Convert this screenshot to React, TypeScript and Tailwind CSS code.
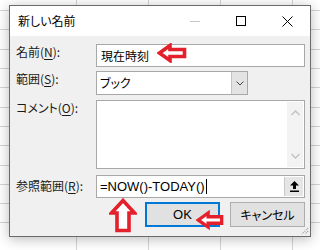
import React from "react";

const jp = "font-['Segoe_UI','Noto_Sans_CJK_JP',sans-serif] [font-feature-settings:'palt']";

function SheetGrid() {
  const cols = [76.5, 148.5, 220.5, 292.5];
  const rows = [10.5, 29.5, 49.5, 68.5, 87.5, 107.5, 126.5, 145.5, 165.5, 184.5, 203.5, 222.5];
  return (
    <svg className="absolute inset-0" width="320" height="250">
      {cols.map((x) => (
        <line key={"c" + x} x1={x} y1={0} x2={x} y2={250} stroke="#d4d4d4" strokeWidth={1} />
      ))}
      {rows.map((y) => (
        <line key={"r" + y} x1={0} y1={y} x2={320} y2={y} stroke="#d4d4d4" strokeWidth={1} />
      ))}
    </svg>
  );
}

function Label({ text, k, rest, className = "" }: { text: string; k: string; rest: string; className?: string }) {
  return (
    <div className={`w-[80px] shrink-0 text-[12px] leading-[16px] text-[#1a1a1a] ${className}`}>
      {text}(<span className="underline underline-offset-[2px]">{k}</span>){rest}
    </div>
  );
}

function RedArrow({ dir, className }: { dir: "left" | "up"; className: string }) {
  if (dir === "left") {
    return (
      <svg className={className} viewBox="0 0 30 20" width="30" height="20">
        <polygon
          points="2.5,10 13,2.5 13,6.5 27.5,6.5 27.5,13.5 13,13.5 13,17.5"
          fill="#fff"
          stroke="#e3202b"
          strokeWidth={3.6}
          strokeLinejoin="miter"
        />
      </svg>
    );
  }
  return (
    <svg className={className} viewBox="0 0 28 35" width="28" height="35">
      <polygon
        points="14,2.5 25.5,15 20,15 20,32.5 8,32.5 8,15 2.5,15"
        fill="#fff"
        stroke="#e3202b"
        strokeWidth={3.6}
        strokeLinejoin="miter"
      />
    </svg>
  );
}

export default function App() {
  return (
    <div className={`relative w-[320px] h-[250px] overflow-hidden bg-white ${jp}`}>
      <SheetGrid />

      <div className="absolute left-[9px] top-[5px] w-[302px] h-[232px] border border-[#6b6b6b] bg-[#f0f0f0] shadow-[0_2px_12px_rgba(0,0,0,0.28)] flex flex-col">
        {/* title bar */}
        <div className="h-[30px] bg-white flex items-center shrink-0">
          <div className="pl-[8px] flex-1 text-[12px] text-black">新しい名前</div>
          <div className="w-[46px] h-full flex items-center justify-center">
            <div className="w-[10px] h-px bg-[#c8c8c8]" />
          </div>
          <div className="w-[46px] h-full flex items-center justify-center">
            <div className="w-[10px] h-[10px] border border-black" />
          </div>
          <div className="w-[46px] h-full flex items-center justify-center">
            <svg width="11" height="11" viewBox="0 0 11 11">
              <path d="M0.5 0.5 L10.5 10.5 M10.5 0.5 L0.5 10.5" stroke="#000" strokeWidth={1} />
            </svg>
          </div>
        </div>

        {/* body */}
        <div className="relative flex-1 flex flex-col pl-[6px] pr-[5px] pt-[8px]">
          <div className="flex items-start">
            <Label text="名前" k="N" rest=":" />
            <div className="flex-1 h-[23px] border border-[#a8a8a8] bg-white flex items-center pl-[4px] text-[12px] text-black">
              現在時刻
            </div>
          </div>

          <div className="flex items-start mt-[4px]">
            <Label text="範囲" k="S" rest=":" />
            <div className="w-[152px] h-[24px] border border-[#a8a8a8] bg-white flex">
              <div className="flex-1 flex items-center pl-[3px] text-[12px] text-black">ブック</div>
              <div className="w-[16px] bg-[#e3e3e3] border-l border-[#c4c4c4] flex items-center justify-center">
                <svg width="8" height="5" viewBox="0 0 8 5">
                  <path d="M0.5 0.5 L4 4 L7.5 0.5" fill="none" stroke="#444" strokeWidth={1} />
                </svg>
              </div>
            </div>
          </div>

          <div className="flex items-start mt-[5px]">
            <Label text="コメント" k="O" rest=":" />
            <div className="flex-1 h-[69px] border border-[#a8a8a8] bg-white flex justify-end">
              <div className="w-[16px] mr-px my-px bg-[#f3f3f3] flex flex-col justify-between items-center py-[8px]">
                <svg width="9" height="6" viewBox="0 0 9 6">
                  <path d="M0.5 5 L4.5 1 L8.5 5" fill="none" stroke="#c2c2c2" strokeWidth={1.4} />
                </svg>
                <svg width="9" height="6" viewBox="0 0 9 6">
                  <path d="M0.5 1 L4.5 5 L8.5 1" fill="none" stroke="#c2c2c2" strokeWidth={1.4} />
                </svg>
              </div>
            </div>
          </div>

          <div className="flex items-start mt-[6px]">
            <Label text="参照範囲" k="R" rest=":" className="pt-[3px]" />
            <div className="flex-1 h-[23px] border border-[#a8a8a8] bg-white flex">
              <div className="flex-1 flex items-center pl-[3px] font-['Liberation_Sans',sans-serif] text-[13px] text-black">
                =NOW()-TODAY()
                <span className="ml-px w-px h-[15px] bg-black" />
              </div>
              <div className="w-[19px] my-px mr-px bg-[#e5e5e5] border-l border-[#c8c8c8] flex items-center justify-center">
                <svg width="9" height="11" viewBox="0 0 9 11">
                  <path d="M4.5 0 L9 4.5 L6 4.5 L6 8 L3 8 L3 4.5 L0 4.5 Z" fill="#000" />
                  <rect x="0" y="9.5" width="9" height="1.5" fill="#000" />
                </svg>
              </div>
            </div>
          </div>

          <div className="flex justify-end gap-[10px] mt-[4px]">
            <button className="w-[75px] h-[25px] border-2 border-[#0078d7] bg-[#e1e1e1] font-['Liberation_Sans',sans-serif] text-[13px] text-black flex items-center justify-center">
              OK
            </button>
            <button className="w-[75px] h-[25px] border border-[#adadad] bg-[#e1e1e1] text-[12px] text-black flex items-center justify-center">
              キャンセル
            </button>
          </div>

          <svg className="absolute right-[1px] bottom-[1px]" width="8" height="8" viewBox="0 0 8 8">
            <path d="M7 1 L1 7 M7 4 L4 7" stroke="#a0a0a0" strokeWidth={1.2} strokeDasharray="1 1" />
          </svg>
        </div>
      </div>

      <RedArrow dir="left" className="absolute left-[157px] top-[43px]" />
      <RedArrow dir="up" className="absolute left-[109px] top-[198px]" />
      <RedArrow dir="left" className="absolute left-[196px] top-[209px] w-[28px] h-[22px]" />
    </div>
  );
}
